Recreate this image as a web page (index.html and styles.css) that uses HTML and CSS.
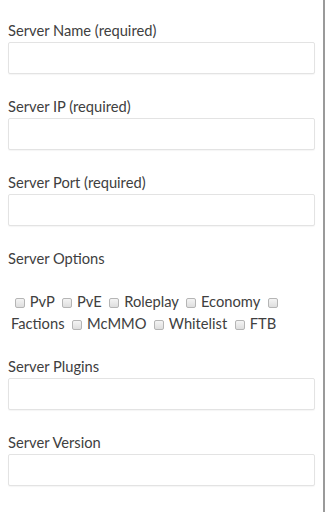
FILE: index.html
```html
<!DOCTYPE html>
<html lang="en">
<head>
    <meta charset="UTF-8">
    <meta name="viewport" content="width=device-width, initial-scale=1.0">
    <title>Add Server</title>
    <link rel="stylesheet" href="styles.css">
</head>
<body>
    <div class="page">
        <form class="server-form">
            <div class="form-group">
                <label for="serverName">Server Name (required)</label>
                <input type="text" id="serverName" name="serverName" required>
            </div>
            <div class="form-group">
                <label for="serverIp">Server IP (required)</label>
                <input type="text" id="serverIp" name="serverIp" required>
            </div>
            <div class="form-group">
                <label for="serverPort">Server Port (required)</label>
                <input type="text" id="serverPort" name="serverPort" required>
            </div>
            <div class="form-group">
                <label>Server Options</label>
                <div class="options"> <input type="checkbox" name="opt" value="pvp"> PvP <input type="checkbox" name="opt" value="pve"> PvE <input type="checkbox" name="opt" value="roleplay"> Roleplay <input type="checkbox" name="opt" value="economy"> Economy <input type="checkbox" name="opt" value="factions"> Factions <input type="checkbox" name="opt" value="mcmmo"> McMMO <input type="checkbox" name="opt" value="whitelist"> Whitelist <input type="checkbox" name="opt" value="ftb"> FTB</div>
            </div>
            <div class="form-group">
                <label for="serverPlugins">Server Plugins</label>
                <input type="text" id="serverPlugins" name="serverPlugins">
            </div>
            <div class="form-group">
                <label for="serverVersion">Server Version</label>
                <input type="text" id="serverVersion" name="serverVersion">
            </div>
        </form>
    </div>
</body>
</html>
```

FILE: styles.css
```css
body {
    margin: 0;
    font-family: 'Lato', sans-serif;
    background-color: #fff;
    color: #404040;
}
.page {
    min-height: 100vh;
    border-right: 2px solid #9a9a9a;
    box-sizing: border-box;
}
.server-form {
    padding: 20px 8px 0;
}
.form-group {
    margin-bottom: 22px;
}
.form-group label {
    display: block;
    font-size: 14.7px;
    line-height: 20px;
    margin-bottom: 2px;
}
.form-group input[type="text"] {
    display: block;
    width: 100%;
    height: 32px;
    box-sizing: border-box;
    border: 1px solid #e3e3e3;
    border-radius: 2px;
    box-shadow: 0 1px 1px rgba(0, 0, 0, 0.04);
    padding: 6px 8px;
    font-family: 'Lato', sans-serif;
    font-size: 14.7px;
}
.options {
    margin-top: 22px;
    padding-left: 3px;
    font-size: 14.7px;
    line-height: 22px;
}
.options input[type="checkbox"] {
    -webkit-appearance: none;
    appearance: none;
    width: 10px;
    height: 10px;
    margin: 0 1px 0 4px;
    vertical-align: -1px;
    border: 1px solid #b5b5b5;
    border-radius: 2px;
    background: linear-gradient(#f4f4f4, #dedede);
    box-sizing: border-box;
}
```
